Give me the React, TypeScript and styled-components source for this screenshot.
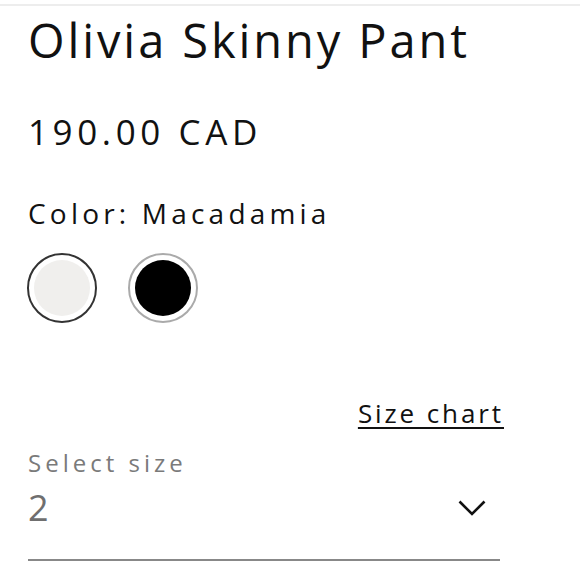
import React from "react";
import styled, { createGlobalStyle } from "styled-components";

const Global = createGlobalStyle`
  html, body { margin: 0; padding: 0; background: #fff; }
  body { font-family: "Open Sans", Lato, sans-serif; color: #111; }
`;

const Page = styled.div`
  margin-top: 4px;
  border-top: 2px solid #ededed;
  padding: 0 0 0 28px;
  width: 580px;
  box-sizing: border-box;
  display: flex;
  flex-direction: column;
`;

const Title = styled.h1`
  margin: 6px 0 0;
  font-size: 47px;
  line-height: 56px;
  font-weight: 400;
  letter-spacing: 2.9px;
  color: #111;
`;

const Price = styled.div`
  margin-top: 44px;
  font-size: 35px;
  line-height: 40px;
  letter-spacing: 4.6px;
  color: #111;
`;

const ColorLabel = styled.div`
  margin-top: 44px;
  font-size: 28px;
  line-height: 34px;
  letter-spacing: 4.2px;
  color: #111;
`;

const Swatches = styled.div`
  display: flex;
  gap: 31px;
  margin-top: 23px;
  margin-left: -1px;
`;

const Swatch = styled.button<{ $fill: string; $ring: string }>`
  width: 70px;
  height: 70px;
  border-radius: 50%;
  border: 2px solid ${(p) => p.$ring};
  padding: 5px;
  background: #fff;
  box-sizing: border-box;
  cursor: pointer;
  &::after {
    content: "";
    display: block;
    width: 100%;
    height: 100%;
    border-radius: 50%;
    background: ${(p) => p.$fill};
  }
`;

const SizeArea = styled.div`
  width: 472px;
  margin-top: 75px;
  display: flex;
  flex-direction: column;
`;

const ChartLink = styled.a`
  align-self: flex-end;
  margin-right: -4px;
  font-size: 26px;
  line-height: 30px;
  letter-spacing: 2.9px;
  color: #111;
  text-decoration: underline;
  text-decoration-thickness: 2px;
  text-underline-offset: 4px;
`;

const Select = styled.div`
  margin-top: 20px;
  border-bottom: 2px solid #888;
  padding-bottom: 31px;
  display: flex;
  flex-direction: column;
`;

const SelectLabel = styled.div`
  font-size: 24px;
  line-height: 30px;
  letter-spacing: 4px;
  color: #7a7a7a;
`;

const SelectRow = styled.div`
  display: flex;
  align-items: center;
  justify-content: space-between;
  margin-top: 10px;
`;

const SelectValue = styled.div`
  font-size: 36px;
  line-height: 40px;
  color: #6f6f6f;
`;

const Chevron = styled.svg`
  width: 28px;
  height: 16px;
  margin-right: 14px;
`;

export default function App() {
  return (
    <>
      <Global />
      <Page>
        <Title>Olivia Skinny Pant</Title>
        <Price>190.00 CAD</Price>
        <ColorLabel>Color: Macadamia</ColorLabel>
        <Swatches>
          <Swatch $fill="#f0efed" $ring="#333" aria-label="Macadamia" />
          <Swatch $fill="#000" $ring="#aaa" aria-label="Black" />
        </Swatches>
        <SizeArea>
          <ChartLink href="#">Size chart</ChartLink>
          <Select>
            <SelectLabel>Select size</SelectLabel>
            <SelectRow>
              <SelectValue>2</SelectValue>
              <Chevron viewBox="0 0 28 16">
                <path d="M1.5 1.5 L14 14 L26.5 1.5" fill="none" stroke="#111" strokeWidth="2.6" />
              </Chevron>
            </SelectRow>
          </Select>
        </SizeArea>
      </Page>
    </>
  );
}
